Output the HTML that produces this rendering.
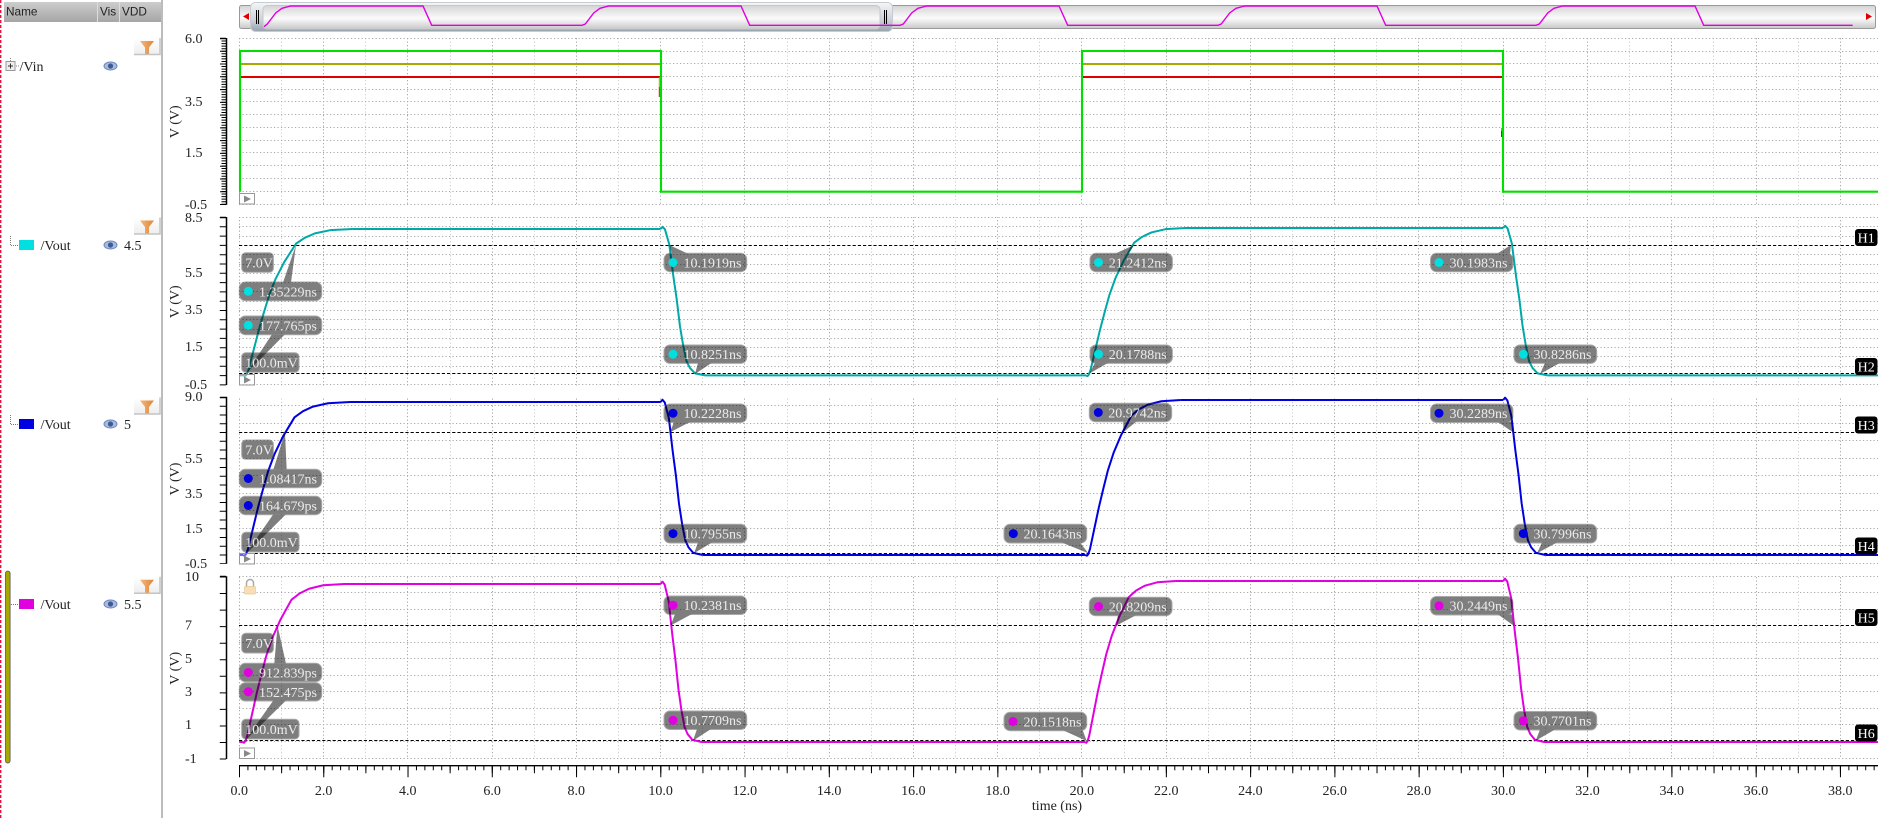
<!DOCTYPE html>
<html><head><meta charset="utf-8"><style>
html,body{margin:0;padding:0;background:#fff;width:1904px;height:820px;overflow:hidden}
svg{display:block}
text{font-family:"Liberation Serif",serif;font-size:14px;fill:#222}
.h{font-family:"Liberation Sans",sans-serif;font-size:11.8px;fill:#222}
.w{fill:#ececec}
.k{fill:#fff;text-anchor:middle}
.x{text-anchor:middle}
.g{fill:none;stroke:#a8a8a8;stroke-width:1;stroke-dasharray:1.2 2.3}
.d{fill:none;stroke:#000;stroke-width:1;stroke-dasharray:3.2 2}
.a{fill:none;stroke:#000}
.b{fill:#000}
.b rect{stroke:#555;stroke-width:1}
.s{fill:none;stroke-width:2;stroke-linejoin:round}
</style></head><body>
<svg width="1904" height="820" viewBox="0 0 1904 820" xmlns="http://www.w3.org/2000/svg">
<defs>
<linearGradient id="hd" x1="0" y1="0" x2="0" y2="1"><stop offset="0" stop-color="#cdcdcd"/><stop offset="1" stop-color="#a6a6a6"/></linearGradient>
<linearGradient id="tr" x1="0" y1="0" x2="0" y2="1"><stop offset="0" stop-color="#d4d4d4"/><stop offset=".55" stop-color="#fbfbfb"/><stop offset="1" stop-color="#c8c8c8"/></linearGradient>
<linearGradient id="th" x1="0" y1="0" x2="0" y2="1"><stop offset="0" stop-color="#f4f6f8"/><stop offset=".6" stop-color="#ccd2d8"/><stop offset="1" stop-color="#98a2ac"/></linearGradient>
<linearGradient id="fn" x1="0" y1="0" x2="1" y2="0"><stop offset="0" stop-color="#f6b878"/><stop offset="1" stop-color="#dd8438"/></linearGradient>
<linearGradient id="fb" x1="0" y1="0" x2="0" y2="1"><stop offset="0" stop-color="#fff"/><stop offset="1" stop-color="#eee"/></linearGradient>
<path id="R" fill="none" vector-effect="non-scaling-stroke" d="M0,0 L1.5,-.5 3,.5 5,4 10,17.5 15,31 20,43 25,54.5 31.5,66 40,77.5 51.5,90 60,94 70,97 85,99.2 107,100"/>
<path id="F" fill="none" vector-effect="non-scaling-stroke" d="M0,0 L2,-1.5 4.4,.3 8.7,10.6 12.7,32 16.1,48 19.4,66.6 22.7,80 26,90.5 29.4,95 34.4,98.6 44.4,100"/>
<g id="FB"><path d="M134 38H159V54H134Z" fill="url(#fb)"/><path d="M134 54.5H160V38" fill="none" stroke="#c4c4c4" stroke-width="1.5"/><path d="M140 41H154L149 47.5V54H145V47.5Z" fill="url(#fn)"/></g>
<g id="EY"><ellipse cx="110.5" cy="0" rx="6.5" ry="4" fill="#a9bbdc" stroke="#6c88bc"/><circle cx="110.5" cy="0" r="2.6" fill="#3f5a96"/></g>
<g id="PL"><rect x="239.5" y="0.5" width="15" height="10.5" fill="#fff" fill-opacity=".4" stroke="#999"/><path d="M244 2.5L251 6L244 9.5Z" fill="#888"/></g>
</defs>

<!-- left panel -->
<path d="M.7 0V820" stroke="#e8103c" stroke-width="1.4" stroke-dasharray="3 2" fill="none"/>
<rect x="4" y="2" width="157" height="20" fill="url(#hd)"/>
<path d="M97.5 2V22M119.5 2V22" stroke="#ddd"/>
<text class="h" x="6" y="15.5">Name</text><text class="h" x="100" y="15.5">Vis</text><text class="h" x="122" y="15.5">VDD</text>
<rect x="161" y="0" width="2" height="818" fill="#bcbcbc"/>
<use href="#FB"/><use href="#FB" y="179.5"/><use href="#FB" y="359.5"/><use href="#FB" y="538.7"/>

<path d="M10.5 58V62M16 66H19" stroke="#888" stroke-dasharray="1 1" fill="none"/>
<rect x="6" y="61.5" width="9" height="9" fill="#eee" stroke="#999"/><path d="M8 66H13M10.5 63.5V68.5" stroke="#333"/>
<text x="19.5" y="71">/Vin</text><use href="#EY" y="66"/>

<path d="M10.5 236V245.5H18" fill="none" stroke="#777" stroke-dasharray="1 1"/>
<rect x="19" y="240" width="15" height="10" fill="#00e0e0"/><text x="40.5" y="250">/Vout</text><use href="#EY" y="245"/><text x="124" y="250">4.5</text>
<path d="M10.5 415V424.5H18" fill="none" stroke="#777" stroke-dasharray="1 1"/>
<rect x="19" y="419" width="15" height="10" fill="#0000e0"/><text x="40.5" y="429">/Vout</text><use href="#EY" y="424"/><text x="124" y="429">5</text>
<path d="M11 604.5H18" fill="none" stroke="#777" stroke-dasharray="1 1"/>
<rect x="19" y="599" width="15" height="10" fill="#e000e0"/><text x="40.5" y="609">/Vout</text><use href="#EY" y="604"/><text x="124" y="609">5.5</text>
<rect x="5.5" y="571" width="4.6" height="192" rx="2.3" fill="#a8a800" stroke="#555" stroke-width=".8"/>

<!-- overview strip -->
<rect x="239.5" y="5.5" width="1636" height="23" rx="2" fill="url(#tr)" stroke="#999"/>
<path d="M249 13V20L243 16.5Z" fill="#e00000"/>
<path d="M1866 13V20L1872 16.5Z" fill="#e00000"/>
<rect x="250.5" y="2.5" width="642" height="29" rx="5" fill="url(#th)" stroke="#c6ccd2"/>
<rect x="263" y="5.5" width="617" height="23.5" rx="4" fill="url(#tr)" stroke="#c4c8cc"/>
<path d="M256.5 10V24M258.5 10V24M884.5 10V24M886.5 10V24" stroke="#000" fill="none"/>
<path fill="none" stroke="#e000e0" stroke-width="1.4" d="M264,26.7 L267.3,24 275.7,13 282,8.3 290.7,6 H423 L431.7,25.3 H582 L585.3,24 593.7,13 600,8.3 608.7,6 H741 L749.7,25.3 H900 L903.3,24 911.7,13 918,8.3 926.7,6 H1059 L1067.7,25.3 H1218 L1221.3,24 1229.7,13 1236,8.3 1244.7,6 H1377 L1385.7,25.3 H1536 L1539.3,24 1547.7,13 1554,8.3 1562.7,6 H1695 L1703.7,25.3 H1852.7"/>

<!-- vertical grid -->
<path fill="none" stroke="#a8a8a8" stroke-dasharray="1.2 2.3" d="M239.5 38V759M323.5 38V759M407.5 38V759M492.5 38V759M576.5 38V759M660.5 38V759M744.5 38V759M829.5 38V759M913.5 38V759M997.5 38V759M1081.5 38V759M1166.5 38V759M1250.5 38V759M1334.5 38V759M1418.5 38V759M1503.5 38V759M1587.5 38V759M1671.5 38V759M1756.5 38V759M1840.5 38V759"/>
<path fill="none" stroke="#d0d0d0" stroke-dasharray="1.2 2.3" d="M281.5 38V759M365.5 38V759M450.5 38V759M534.5 38V759M618.5 38V759M702.5 38V759M787.5 38V759M871.5 38V759M955.5 38V759M1039.5 38V759M1124.5 38V759M1208.5 38V759M1292.5 38V759M1376.5 38V759M1461.5 38V759M1545.5 38V759M1629.5 38V759M1713.5 38V759M1798.5 38V759"/>
<rect x="235" y="205" width="1650" height="12" fill="#fff"/><rect x="235" y="385.5" width="1650" height="11.5" fill="#fff"/><rect x="235" y="564" width="1650" height="12" fill="#fff"/>

<!-- horizontal grid -->
<path class="g" d="M239 38.5H1878M239 51.5H1878M239 63.5H1878M239 76.5H1878M239 89.5H1878M239 101.5H1878M239 114.5H1878M239 127.5H1878M239 140.5H1878M239 152.5H1878M239 165.5H1878M239 178.5H1878M239 191.5H1878M239 204.5H1878"/>
<path class="g" d="M239 217.5H1878M239 226.5H1878M239 236.5H1878M239 254.5H1878M239 264.5H1878M239 273.5H1878M239 282.5H1878M239 291.5H1878M239 301.5H1878M239 310.5H1878M239 319.5H1878M239 329.5H1878M239 338.5H1878M239 347.5H1878M239 356.5H1878M239 366.5H1878M239 384.5H1878"/>
<path class="g" d="M239 405.5H1878M239 423.5H1878M239 440.5H1878M239 458.5H1878M239 475.5H1878M239 493.5H1878M239 510.5H1878M239 528.5H1878M239 545.5H1878M239 563.5H1878"/>
<path class="g" d="M239 576.5H1878M239 592.5H1878M239 609.5H1878M239 642.5H1878M239 658.5H1878M239 675.5H1878M239 691.5H1878M239 708.5H1878M239 724.5H1878M239 741.5H1878M239 758.5H1878"/>

<!-- y axes -->
<path class="a" stroke-width="1.5" d="M226.5 38V204.8M226.5 217V385M226.5 396.7V563.8M226.5 576.3V759M220 38.5H226M220 217.5H226M220 397.5H226M220 576.5H226"/>
<path d="M224 38V205" fill="none" stroke="#000" stroke-width="5" stroke-dasharray="1 1.55"/>
<path d="M223 38V205" fill="none" stroke="#000" stroke-width="6" stroke-dasharray="1 11.77"/>
<path d="M223 217V385.5" fill="none" stroke="#000" stroke-width="6.5" stroke-dasharray="1 8.3"/>
<path d="M223 397V564" fill="none" stroke="#000" stroke-width="6.5" stroke-dasharray="1 7.75"/>
<path d="M223 576.5V759.5" fill="none" stroke="#000" stroke-width="6.5" stroke-dasharray="1 15.55"/>

<text x="185" y="43">6.0</text><text x="185" y="106">3.5</text><text x="185" y="157">1.5</text><text x="185" y="209">-0.5</text>
<text x="185" y="222">8.5</text><text x="185" y="277">5.5</text><text x="185" y="314">3.5</text><text x="185" y="351">1.5</text><text x="185" y="389">-0.5</text>
<text x="185" y="401">9.0</text><text x="185" y="463">5.5</text><text x="185" y="498">3.5</text><text x="185" y="533">1.5</text><text x="185" y="568">-0.5</text>
<text x="185" y="581">10</text><text x="185" y="629.5">7</text><text x="185" y="663">5</text><text x="185" y="696">3</text><text x="185" y="729">1</text><text x="185" y="763">-1</text>
<text class="x" transform="translate(179,121.7) rotate(-90)">V (V)</text>
<text class="x" transform="translate(179,301.7) rotate(-90)">V (V)</text>
<text class="x" transform="translate(179,479) rotate(-90)">V (V)</text>
<text class="x" transform="translate(179,668.3) rotate(-90)">V (V)</text>

<!-- x axis -->
<path class="a" stroke-width="1.3" d="M239 765.7H1878"/>
<path d="M239 768H1878" fill="none" stroke="#000" stroke-width="4.5" stroke-dasharray="1 7.426"/>
<path d="M239 769.5H1878" fill="none" stroke="#000" stroke-width="7.5" stroke-dasharray="1 41.13"/>
<path d="M239 771.5H1878" fill="none" stroke="#000" stroke-width="11.5" stroke-dasharray="1 83.26"/>
<g class="xl">
<text class="x" x="239.3" y="795">0.0</text><text class="x" x="323.6" y="795">2.0</text><text class="x" x="407.8" y="795">4.0</text><text class="x" x="492.1" y="795">6.0</text><text class="x" x="576.3" y="795">8.0</text><text class="x" x="660.6" y="795">10.0</text><text class="x" x="744.9" y="795">12.0</text><text class="x" x="829.1" y="795">14.0</text><text class="x" x="913.4" y="795">16.0</text><text class="x" x="997.6" y="795">18.0</text><text class="x" x="1081.9" y="795">20.0</text><text class="x" x="1166.2" y="795">22.0</text><text class="x" x="1250.4" y="795">24.0</text><text class="x" x="1334.7" y="795">26.0</text><text class="x" x="1418.9" y="795">28.0</text><text class="x" x="1503.2" y="795">30.0</text><text class="x" x="1587.5" y="795">32.0</text><text class="x" x="1671.7" y="795">34.0</text><text class="x" x="1756" y="795">36.0</text><text class="x" x="1840.2" y="795">38.0</text>
</g>
<text class="x" x="1057" y="810">time (ns)</text>

<!-- threshold lines -->
<path class="d" d="M239 245.5H1855M239 373.5H1855M239 432.5H1855M239 553.5H1855M239 625.5H1855M239 740.5H1855"/>

<!-- Vin traces -->
<path fill="none" stroke="#a8a800" stroke-width="1.9" d="M240 64H660M1082 64H1502"/>
<path fill="none" stroke="#e00000" stroke-width="1.9" d="M240 77H660M1082 77H1502"/>
<path fill="none" stroke="#a8a800" d="M659.3 77V87M1501.5 128V131"/>
<path fill="none" stroke="#e00000" d="M659.3 87V97M1501.5 131V137"/>
<path fill="none" stroke="#00e000" stroke-width="2.1" stroke-linejoin="miter" d="M240 191.7V51H661V191.7H1082V51H1503V191.7H1878"/>

<!-- Vout 4.5 -->
<g stroke="#00a8a8" class="s">
<path d="M239.3 375.4H243.5M352.6 229H660.6M705 375.4H1086M1186 228H1503.2M1547.6 375.4H1878"/>
<use href="#R" transform="translate(243.5,375.4) scale(1.02,-1.464)"/>
<use href="#F" transform="translate(660.6,229) scale(1,1.464)"/>
<use href="#R" transform="translate(1086,375.4) scale(.935,-1.474)"/>
<use href="#F" transform="translate(1503.2,228) scale(1,1.474)"/>
</g>
<!-- Vout 5 -->
<g stroke="#0000e0" class="s">
<path d="M239.3 555H243M350 402H660.6M702.8 555H1085.6M1180.8 400H1503.2M1545.4 555H1878"/>
<use href="#R" transform="translate(243,555) scale(1,-1.53)"/>
<use href="#F" transform="translate(660.6,402) scale(.95,1.53)"/>
<use href="#R" transform="translate(1085.6,555) scale(.89,-1.55)"/>
<use href="#F" transform="translate(1503.2,400) scale(.95,1.55)"/>
</g>
<!-- Vout 5.5 -->
<g stroke="#e000e0" class="s">
<path d="M239.3 742H242.5M344 584H660.6M701.4 742H1085M1176 581H1503.2M1544 742H1878"/>
<use href="#R" transform="translate(242.5,742) scale(.95,-1.58)"/>
<use href="#F" transform="translate(660.6,584) scale(.92,1.58)"/>
<use href="#R" transform="translate(1085,742) scale(.85,-1.61)"/>
<use href="#F" transform="translate(1503.2,581) scale(.92,1.61)"/>
</g>

<!-- play buttons -->
<use href="#PL" y="193"/><use href="#PL" y="374"/><use href="#PL" y="553"/><use href="#PL" y="747.5"/>

<!-- lock -->
<path d="M246.5 587V583a3.5 3.5 0 0 1 7 0V587" fill="none" stroke="#aaa" stroke-width="1.5"/>
<rect x="244.5" y="586.5" width="11" height="7.5" rx="1" fill="#f6dfb6" stroke="#e8c890" stroke-width=".7"/>

<!-- tooltips: bubbles -->
<g class="b" opacity=".5"><rect x="241.7" y="252.7" width="31.7" height="19.6" rx="4"/></g>
<g class="b" opacity=".5"><rect x="239.3" y="282" width="82.4" height="18.7" rx="6"/><path d="M283 282.5L296 245L291 282.5Z"/></g>
<g class="b" opacity=".5"><rect x="239.3" y="316" width="82.4" height="18.7" rx="6"/><path d="M272 334.2L246.5 373L285 334.2Z"/></g>
<g class="b" opacity=".5"><rect x="241.7" y="352.7" width="57.3" height="19.6" rx="4"/></g>
<g class="b" opacity=".5"><rect x="664" y="253.3" width="82.7" height="18.4" rx="6"/><path d="M669.3 245L688 253.8H672Z"/></g>
<g class="b" opacity=".5"><rect x="664" y="345" width="82.7" height="18.4" rx="6"/><path d="M695 374L698 362.9H711.7Z"/></g>
<g class="b" opacity=".5"><rect x="1090" y="253.3" width="82.4" height="18.4" rx="6"/><path d="M1134.2 245L1115 253.8H1128Z"/></g>
<g class="b" opacity=".5"><rect x="1090" y="345" width="82.4" height="18.4" rx="6"/><path d="M1089.4 373.5L1095 362.9H1108Z"/></g>
<g class="b" opacity=".5"><rect x="1430.5" y="253.3" width="82.4" height="18.4" rx="6"/><path d="M1511 245L1497 253.8H1510Z"/></g>
<g class="b" opacity=".5"><rect x="1514" y="345" width="82.7" height="18.4" rx="6"/><path d="M1540 374L1545 362.9H1560Z"/></g>

<g class="b" opacity=".5"><rect x="241.7" y="440" width="31.7" height="19.3" rx="4"/></g>
<g class="b" opacity=".5"><rect x="239.3" y="469.3" width="82.4" height="18.4" rx="6"/><path d="M273.3 469.8L285 432.3L286.7 469.8Z"/></g>
<g class="b" opacity=".5"><rect x="239.3" y="496.3" width="82.4" height="18.4" rx="6"/><path d="M273.3 514.2L245 555L286 514.2Z"/></g>
<g class="b" opacity=".5"><rect x="241.7" y="532.3" width="57.3" height="19.7" rx="4"/></g>
<g class="b" opacity=".5"><rect x="664" y="404" width="82.7" height="18.5" rx="6"/><path d="M670 432.3L674 422H690Z"/></g>
<g class="b" opacity=".5"><rect x="664" y="524.3" width="82.7" height="18.7" rx="6"/><path d="M694 553.3L698 542.5H712Z"/></g>
<g class="b" opacity=".5"><rect x="1089.3" y="403.3" width="82.4" height="18.4" rx="6"/><path d="M1123.3 432.3V421.2H1136.7Z"/></g>
<g class="b" opacity=".5"><rect x="1004" y="524.3" width="82.7" height="18.7" rx="6"/><path d="M1088.3 553.3L1061.7 542.5H1080Z"/></g>
<g class="b" opacity=".5"><rect x="1430.5" y="404" width="82.4" height="18.5" rx="6"/><path d="M1512.9 432.3L1498 422H1512Z"/></g>
<g class="b" opacity=".5"><rect x="1514" y="524.3" width="82.7" height="18.7" rx="6"/><path d="M1537 553.3L1542 542.5H1557Z"/></g>

<g class="b" opacity=".5"><rect x="241.7" y="633.3" width="31.7" height="19.7" rx="4"/></g>
<g class="b" opacity=".5"><rect x="239.3" y="663.3" width="82.4" height="18.4" rx="6"/><path d="M274.3 663.8L277.5 625.5L286 663.8Z"/></g>
<g class="b" opacity=".5"><rect x="239.3" y="682.7" width="82.4" height="18.3" rx="6"/><path d="M273.3 700.5L245 740.7L286 700.5Z"/></g>
<g class="b" opacity=".5"><rect x="241.7" y="719.3" width="57.3" height="19.7" rx="4"/></g>
<g class="b" opacity=".5"><rect x="664" y="596" width="82.7" height="18.5" rx="6"/><path d="M670.6 625.5L675 614H692Z"/></g>
<g class="b" opacity=".5"><rect x="664" y="711" width="82.7" height="18.5" rx="6"/><path d="M693 740.7L697 729H711Z"/></g>
<g class="b" opacity=".5"><rect x="1089.3" y="597.3" width="82.7" height="18.4" rx="6"/><path d="M1116 625.7L1118 615.2H1136Z"/></g>
<g class="b" opacity=".5"><rect x="1004" y="712.3" width="82.7" height="18.4" rx="6"/><path d="M1086.7 741L1063 730.2H1082.7Z"/></g>
<g class="b" opacity=".5"><rect x="1430.5" y="596.5" width="82.4" height="18.5" rx="6"/><path d="M1513.6 625.5L1498 614.5H1512Z"/></g>
<g class="b" opacity=".5"><rect x="1514" y="711.5" width="82.7" height="18.5" rx="6"/><path d="M1535.6 740.7L1540 729.5H1555Z"/></g>

<!-- dots -->
<g fill="#00e0e0"><circle cx="248.3" cy="291.3" r="4.5"/><circle cx="248.3" cy="325.3" r="4.5"/><circle cx="673" cy="262.5" r="4.5"/><circle cx="673" cy="354.2" r="4.5"/><circle cx="1098.5" cy="262.5" r="4.5"/><circle cx="1098.5" cy="354.2" r="4.5"/><circle cx="1439" cy="262.5" r="4.5"/><circle cx="1523.3" cy="354.2" r="4.5"/></g>
<g fill="#0000e0"><circle cx="248.3" cy="478.5" r="4.5"/><circle cx="248.3" cy="505.5" r="4.5"/><circle cx="673" cy="413.2" r="4.5"/><circle cx="673" cy="533.6" r="4.5"/><circle cx="1098.3" cy="412.5" r="4.5"/><circle cx="1013.3" cy="533.6" r="4.5"/><circle cx="1439" cy="413.2" r="4.5"/><circle cx="1523.3" cy="533.6" r="4.5"/></g>
<g fill="#e000e0"><circle cx="248.3" cy="672.5" r="4.5"/><circle cx="248.3" cy="691.8" r="4.5"/><circle cx="673" cy="605.2" r="4.5"/><circle cx="673" cy="720.2" r="4.5"/><circle cx="1098.5" cy="606.5" r="4.5"/><circle cx="1013" cy="721.5" r="4.5"/><circle cx="1439" cy="605.7" r="4.5"/><circle cx="1523.3" cy="720.7" r="4.5"/></g>

<!-- tooltip text -->
<g>
<text class="w" x="245.3" y="267.5">7.0V</text>
<text class="w" x="259" y="296.3">1.35229ns</text>
<text class="w" x="259" y="330.3">177.765ps</text>
<text class="w" x="245.3" y="367.5">100.0mV</text>
<text class="w" x="683.5" y="267.5">10.1919ns</text>
<text class="w" x="683.5" y="359.2">10.8251ns</text>
<text class="w" x="1108.8" y="267.5">21.2412ns</text>
<text class="w" x="1108.8" y="359.2">20.1788ns</text>
<text class="w" x="1449.5" y="267.5">30.1983ns</text>
<text class="w" x="1533.5" y="359.2">30.8286ns</text>

<text class="w" x="245.3" y="454.7">7.0V</text>
<text class="w" x="259" y="483.5">1.08417ns</text>
<text class="w" x="259" y="510.5">164.679ps</text>
<text class="w" x="245.3" y="547">100.0mV</text>
<text class="w" x="683.5" y="418.2">10.2228ns</text>
<text class="w" x="683.5" y="538.6">10.7955ns</text>
<text class="w" x="1108.3" y="417.5">20.9742ns</text>
<text class="w" x="1023.5" y="538.6">20.1643ns</text>
<text class="w" x="1449.5" y="418.2">30.2289ns</text>
<text class="w" x="1533.5" y="538.6">30.7996ns</text>

<text class="w" x="245.3" y="648">7.0V</text>
<text class="w" x="259" y="677.5">912.839ps</text>
<text class="w" x="259" y="696.8">152.475ps</text>
<text class="w" x="245.3" y="734">100.0mV</text>
<text class="w" x="683.5" y="610.2">10.2381ns</text>
<text class="w" x="683.5" y="725.2">10.7709ns</text>
<text class="w" x="1108.8" y="611.5">20.8209ns</text>
<text class="w" x="1023.5" y="726.5">20.1518ns</text>
<text class="w" x="1449.5" y="610.7">30.2449ns</text>
<text class="w" x="1533.5" y="725.7">30.7701ns</text>
</g>

<!-- H labels -->
<rect x="1855" y="229" width="22.5" height="17" rx="3" fill="#000"/><text class="k" x="1866.2" y="242.5">H1</text>
<rect x="1855" y="358" width="22.5" height="17" rx="3" fill="#000"/><text class="k" x="1866.2" y="371.5">H2</text>
<rect x="1855" y="416.5" width="22.5" height="17" rx="3" fill="#000"/><text class="k" x="1866.2" y="430">H3</text>
<rect x="1855" y="537.5" width="22.5" height="17" rx="3" fill="#000"/><text class="k" x="1866.2" y="551">H4</text>
<rect x="1855" y="609" width="22.5" height="17" rx="3" fill="#000"/><text class="k" x="1866.2" y="622.5">H5</text>
<rect x="1855" y="724.5" width="22.5" height="17" rx="3" fill="#000"/><text class="k" x="1866.2" y="738">H6</text>
</svg>
</body></html>
